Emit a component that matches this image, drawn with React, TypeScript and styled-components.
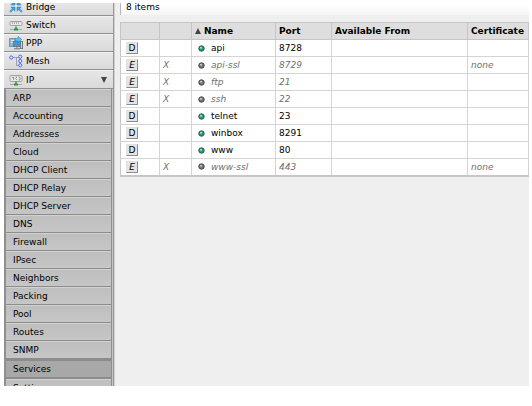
import React from "react";
import styled, { createGlobalStyle, css } from "styled-components";

const GlobalStyle = createGlobalStyle`
  * { box-sizing: border-box; }
  body { margin: 0; background: #fff; }
`;

const Frame = styled.div`
  display: flex;
  height: 100vh;
  padding: 3px 3px 20px 4px;
  overflow: hidden;
  font-family: "DejaVu Sans", Verdana, sans-serif;
  font-size: 9px;
  line-height: 12px;
  color: #000;
`;

const Sidebar = styled.nav`
  flex: 0 0 110px;
  min-height: 0;
  overflow: hidden;
  background: #d4d4d4;
  border-right: 1px solid #989898;
`;

const List = styled.ul`
  list-style: none;
  margin: 0;
  padding: 0;
`;

const MenuLink = styled.a<{ $first?: boolean; $open?: boolean }>`
  display: flex;
  align-items: center;
  gap: 3px;
  height: ${(p) => (p.$first ? 13 : p.$open ? 19 : 18)}px;
  padding: ${(p) => (p.$first ? "0 6px 4px 5px" : "0 6px 0 5px")};
  background: linear-gradient(#e6e6e6, #dadada);
  border-bottom: 1px solid #909090;
  border-top: ${(p) => (p.$first ? "0" : "1px solid #f2f2f2")};
  color: inherit;
  text-decoration: none;
  svg { flex: none; }
`;

const Arrow = styled.svg`
  margin-left: auto;
`;

const SubList = styled(List)`
  padding: 0 1px 0 2px;
  background: #8f8f8f;
  border-right: 1px solid #c4c4c4;
`;

const SubLink = styled.a<{ $active?: boolean }>`
  display: flex;
  align-items: center;
  height: ${(p) => (p.$active ? 20 : 18)}px;
  padding: 0 7px;
  color: inherit;
  text-decoration: none;
  background: linear-gradient(#bebebe, #c6c6c6);
  border-top: 1px solid #d2d2d2;
  border-bottom: 1px solid #8c8c8c;
  ${(p) =>
    p.$active &&
    css`
      background: #a8a8a8;
      border-top-color: #8c8c8c;
      border-bottom-width: 2px;
      border-top-width: 2px;
    `}
`;

const Main = styled.main`
  flex: 1 1 0;
  min-width: 0;
  padding-left: 5px;
  overflow: hidden;
  background: #efefef;
  border-left: 1px solid #d0d0d0;
`;

const StatusBar = styled.div`
  height: 12px;
  margin-bottom: 7px;
  padding: 0 5px;
  line-height: 8px;
  border-left: 1px solid #b8b8b8;
  background: linear-gradient(#fff, #f6f6f6);
`;

const Table = styled.table`
  width: 100%;
  table-layout: fixed;
  border-collapse: collapse;
  background: #fff;
  border-left: 1px solid #c6c6c6;
  border-bottom: 2px solid #c6c6c6;
`;

const Col = styled.col<{ $w?: number }>`
  width: ${(p) => (p.$w ? `${p.$w}px` : "auto")};
`;

const HeadCell = styled.th`
  height: 17px;
  padding: 0 3px;
  text-align: left;
  white-space: nowrap;
  background: #dedede;
  border: 1px solid #c6c6c6;
`;

const Row = styled.tr<{ $off: boolean }>`
  ${(p) => p.$off && css`font-style: italic; color: #707070;`}
`;

const Cell = styled.td<{ $inset?: boolean }>`
  height: 17px;
  padding: 0 ${(p) => (p.$inset ? 5 : 3)}px;
  white-space: nowrap;
  border: 1px solid #d4d4d4;
  border-left-color: #c6c6c6;
`;

const NameBox = styled.div`
  display: flex;
  align-items: center;
  gap: 6px;
  padding-left: 1px;
`;

const HeadBox = styled.div`
  display: flex;
  align-items: center;
  gap: 3px;
`;

const RowButton = styled.button`
  display: block;
  width: 12px;
  height: 12px;
  padding: 0;
  font: inherit;
  line-height: 10px;
  color: #000;
  background: #e4e4e4;
  border: 1px solid;
  border-color: #e0e0e0 #8c8c8c #8c8c8c #e0e0e0;
`;

const Dot = ({ off }: { off: boolean }) => (
  <svg width="7" height="7" viewBox="0 0 7 7" aria-hidden="true">
    <circle cx="3.5" cy="3.5" r="2.7" fill={off ? "#777" : "#21a56c"} stroke={off ? "#444" : "#265a44"} />
    <circle cx="3" cy="2.7" r="1" fill={off ? "#ccc" : "#9bf0c6"} />
  </svg>
);

const SortMark = () => (
  <svg width="6" height="6" viewBox="0 0 6 6" aria-hidden="true">
    <path d="M3 0 6 6H0Z" fill="#444" />
  </svg>
);

const BridgeIcon = () => (
  <svg width="14" height="11" viewBox="0 3 14 11" aria-hidden="true">
    <g stroke="#4ea6e2" strokeWidth="2.4">
      <path d="M1 1 4 4M13 1 10 4M1 13 4 10M13 13 10 10" />
    </g>
    <g fill="#3f9fe2" stroke="#2a7cbc" strokeWidth=".5">
      <path d="M6 6V1.8L1.8 6Z" />
      <path d="M8 6V1.8L12.2 6Z" />
      <path d="M6 8V12.2L1.8 8Z" />
      <path d="M8 8V12.2L12.2 8Z" />
    </g>
  </svg>
);

const PortIcon = ({ tall }: { tall?: boolean }) => (
  <svg width="14" height="14" viewBox="0 0 14 14" aria-hidden="true">
    <rect x="1" y={tall ? 2.5 : 3.5} width="12" height={tall ? 6 : 4} rx="1" fill="#e9e9e9" stroke="#a2a2a2" />
    {tall ? (
      <path d="M3 4.5H5M4.5 4V7M6.5 4H8L6.5 5.5 8 7M9.5 4H11V7H9.5" fill="none" stroke="#858585" strokeWidth=".8" />
    ) : (
      <path d="M3 5H11" stroke="#777" strokeDasharray="1 1" />
    )}
    <path d="M7 8.5V11" stroke="#349348" strokeWidth="1.5" />
    <path d="M1 11.5H13" stroke="#a2aaa2" />
    <path d="M5 11.5H9" stroke="#2a9a40" strokeWidth="2" />
  </svg>
);

const PppIcon = () => (
  <svg width="14" height="14" viewBox="0 0 14 14" aria-hidden="true">
    <rect x=".5" y="2.5" width="6" height="8" fill="#8db8d4" stroke="#8a959d" />
    <path d="M2 4.5H5M2 6.5H5" stroke="#d8e6ee" />
    <rect x="11.5" y="5.5" width="2" height="7" fill="#d2d6d8" stroke="#737b80" />
    <rect x="4.5" y="5.5" width="7" height="5" fill="#3f98d8" stroke="#707a82" />
    <path d="M8 11V12.5M5 12.8H11" stroke="#6e777d" />
    <path d="M6 2.4H9V.5L12.8 3.5 9 6.5V4.6H6Z" fill="#5cc1f6" stroke="#2b87c4" strokeWidth=".6" />
  </svg>
);

const MeshIcon = () => (
  <svg width="14" height="14" viewBox="0 0 14 14" aria-hidden="true">
    <path d="M4 3.5H11M7.5 3.5V11.5H11M11.5 4V11" fill="none" stroke="#8a8fa8" strokeWidth=".8" />
    <g fill="#dce4ff" stroke="#5570d4">
      <circle cx="2.2" cy="3.5" r="1.6" />
      <circle cx="11.2" cy="2.7" r="1.6" />
      <circle cx="11.2" cy="7" r="1.6" />
      <circle cx="11.2" cy="11.3" r="1.6" />
    </g>
  </svg>
);

const menu = [
  { label: "Bridge", icon: <BridgeIcon /> },
  { label: "Switch", icon: <PortIcon /> },
  { label: "PPP", icon: <PppIcon /> },
  { label: "Mesh", icon: <MeshIcon /> },
  { label: "IP", icon: <PortIcon tall />, open: true },
];

const ipMenu = [
  "ARP", "Accounting", "Addresses", "Cloud", "DHCP Client", "DHCP Relay",
  "DHCP Server", "DNS", "Firewall", "IPsec", "Neighbors", "Packing", "Pool",
  "Routes", "SNMP", "Services", "Settings",
];

const services = [
  { name: "api", port: 8728, off: false, cert: "" },
  { name: "api-ssl", port: 8729, off: true, cert: "none" },
  { name: "ftp", port: 21, off: true, cert: "" },
  { name: "ssh", port: 22, off: true, cert: "" },
  { name: "telnet", port: 23, off: false, cert: "" },
  { name: "winbox", port: 8291, off: false, cert: "" },
  { name: "www", port: 80, off: false, cert: "" },
  { name: "www-ssl", port: 443, off: true, cert: "none" },
];

export default function App() {
  return (
    <>
      <GlobalStyle />
      <Frame>
        <Sidebar>
          <List>
            {menu.map((m, i) => (
              <li key={m.label}>
                <MenuLink href="#" $first={i === 0} $open={m.open}>
                  {m.icon}
                  {m.label}
                  {m.open && (
                    <Arrow width="6" height="6" viewBox="0 0 6 6" aria-hidden="true">
                      <path d="M0 0H6L3 6Z" fill="#444" />
                    </Arrow>
                  )}
                </MenuLink>
              </li>
            ))}
          </List>
          <SubList>
            {ipMenu.map((label) => (
              <li key={label}>
                <SubLink href="#" $active={label === "Services"}>{label}</SubLink>
              </li>
            ))}
          </SubList>
        </Sidebar>
        <Main>
          <StatusBar>8 items</StatusBar>
          <Table>
            <colgroup>
              <Col $w={39} />
              <Col $w={32} />
              <Col $w={84} />
              <Col $w={56} />
              <Col $w={136} />
              <Col />
            </colgroup>
            <thead>
              <tr>
                <HeadCell />
                <HeadCell />
                <HeadCell><HeadBox><SortMark />Name</HeadBox></HeadCell>
                <HeadCell>Port</HeadCell>
                <HeadCell>Available From</HeadCell>
                <HeadCell>Certificate</HeadCell>
              </tr>
            </thead>
            <tbody>
              {services.map((s) => (
                <Row key={s.name} $off={s.off}>
                  <Cell $inset>
                    <RowButton type="button" aria-label={`${s.off ? "Enable" : "Disable"} ${s.name}`}>
                      {s.off ? "E" : "D"}
                    </RowButton>
                  </Cell>
                  <Cell>{s.off ? "X" : ""}</Cell>
                  <Cell $inset><NameBox><Dot off={s.off} />{s.name}</NameBox></Cell>
                  <Cell>{s.port}</Cell>
                  <Cell />
                  <Cell>{s.cert}</Cell>
                </Row>
              ))}
            </tbody>
          </Table>
        </Main>
      </Frame>
    </>
  );
}
